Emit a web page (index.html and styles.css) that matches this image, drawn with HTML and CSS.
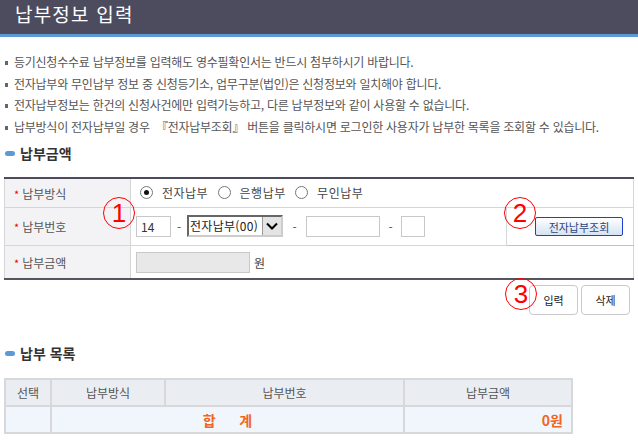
FILE: index.html
```html
<!DOCTYPE html>
<html lang="ko">

<head>
	<meta charset="utf-8">
	<meta name="viewport" content="width=device-width, initial-scale=1.0">
	<title>납부정보 입력</title>
	<link rel="stylesheet" href="styles.css">
</head>

<body>
	<header class="page_head">
		<h1>납부정보 입력</h1>
	</header>

	<main>
		<ul class="notice">
			<li>등기신청수수료 납부정보를 입력해도 영수필확인서는 반드시 첨부하시기 바랍니다.</li>
			<li>전자납부와 무인납부 정보 중 신청등기소, 업무구분(법인)은 신청정보와 일치해야 합니다.</li>
			<li>전자납부정보는 한건의 신청사건에만 입력가능하고, 다른 납부정보와 같이 사용할 수 없습니다.</li>
			<li>납부방식이 전자납부일 경우 &nbsp;『전자납부조회』 버튼을 클릭하시면 로그인한 사용자가 납부한 목록을 조회할 수 있습니다.</li>
		</ul>

		<h2 class="sec_title">납부금액</h2>

		<div class="pay_form">
			<table class="form_table">
				<tr>
					<th><span class="req">*</span>납부방식</th>
					<td colspan="2">
						<label class="radio"><span class="dot checked"></span>전자납부</label>
						<label class="radio"><span class="dot"></span>은행납부</label>
						<label class="radio"><span class="dot"></span>무인납부</label>
					</td>
				</tr>
				<tr>
					<th><span class="req">*</span>납부번호</th>
					<td class="num_cell">
						<div class="num_wrap">
							<input class="field w34" type="text" value="14">
							<span class="dash d1">-</span>
							<div class="fake_select">
								<span class="sel_text">전자납부(00)</span>
								<span class="sel_btn">
									<svg width="12" height="8" viewBox="0 0 12 8"><path d="M1 1.5 L6 6.5 L11 1.5" fill="none" stroke="#000" stroke-width="2"/></svg>
								</span>
							</div>
							<span class="dash d2">-</span>
							<input class="field w74" type="text">
							<span class="dash d3">-</span>
							<input class="field w24" type="text">
						</div>
					</td>
					<td class="lookup_cell"><button class="lookup_btn">전자납부조회</button></td>
				</tr>
				<tr>
					<th><span class="req">*</span>납부금액</th>
					<td colspan="2">
						<div class="num_wrap">
							<input class="field w114 disabled" type="text" disabled>
							<span class="unit">원</span>
						</div>
					</td>
				</tr>
			</table>

			<div class="btn_row">
				<button class="act_btn">입력</button>
				<button class="act_btn">삭제</button>
			</div>

			<span class="mark mark1">1</span>
			<span class="mark mark2">2</span>
			<span class="mark mark3">3</span>
		</div>

		<h2 class="sec_title list_title">납부 목록</h2>

		<table class="list_table">
			<tr>
				<th class="c1">선택</th>
				<th class="c2">납부방식</th>
				<th class="c3">납부번호</th>
				<th class="c4">납부금액</th>
			</tr>
			<tr class="sum_row">
				<td></td>
				<td colspan="2" class="sum_label">합&nbsp;&nbsp;&nbsp;&nbsp;&nbsp;&nbsp;계</td>
				<td class="sum_value">0원</td>
			</tr>
		</table>
	</main>
</body>

</html>
```

FILE: styles.css
```css
* {
	margin: 0;
	padding: 0;
	box-sizing: border-box;
}

body {
	font-family: "Noto Sans CJK KR", "Noto Sans", sans-serif;
	font-size: 12px;
	color: #555;
	background: #fff;
}

/* 상단 제목 */
.page_head {
	height: 37px;
	background: #4d4c5e;
	border-bottom: 3px solid #5b9bd5;
	padding-left: 15px;
}

.page_head h1 {
	font-size: 19px;
	font-weight: normal;
	color: #fff;
	line-height: 28px;
	letter-spacing: 1.2px;
}

/* 안내문 */
.notice {
	list-style: none;
	margin-top: 14px;
}

.notice li {
	position: relative;
	padding-left: 14px;
	line-height: 21.6px;
	letter-spacing: -0.25px;
	white-space: nowrap;
}

.notice li::before {
	content: "";
	position: absolute;
	left: 5px;
	top: 10px;
	width: 3px;
	height: 4px;
	background: #666;
}

/* 소제목 */
.sec_title {
	margin-top: 6px;
	padding-left: 20px;
	position: relative;
	font-size: 14px;
	line-height: 20px;
	color: #333;
}

.sec_title::before {
	content: "";
	position: absolute;
	left: 5px;
	top: 8px;
	width: 10px;
	height: 5px;
	border-radius: 3px;
	background: #5b9bd5;
}

/* 입력 폼 */
.pay_form {
	position: relative;
	margin: 14px 4px 0 4px;
}

.form_table {
	width: 630px;
	border-collapse: collapse;
	border-top: 2px solid #4d4c5e;
	border-bottom: 2px solid #55555f;
}

.form_table th {
	width: 126px;
	background: #f3f3f6;
	font-weight: normal;
	text-align: left;
	padding-left: 9px;
	border: 1px solid #d6d6d9;
	border-top: 0;
	color: #555;
}

.form_table td {
	border: 1px solid #d6d6d9;
	border-top: 0;
	border-left: 0;
	padding-left: 5px;
}

.form_table tr:nth-child(1) th,
.form_table tr:nth-child(1) td {
	height: 29px;
}

.form_table tr:nth-child(2) th,
.form_table tr:nth-child(2) td {
	height: 38px;
}

.form_table tr:nth-child(3) th,
.form_table tr:nth-child(3) td {
	height: 34px;
	border-bottom: 0;
}

.req {
	color: #e00;
	margin-right: 3px;
	font-size: 11px;
}

.radio {
	display: inline-flex;
	align-items: center;
	margin-left: 4px;
	margin-right: 2px;
	font-size: 12px;
	color: #444;
	letter-spacing: 0.5px;
}

.dot {
	display: inline-block;
	width: 13px;
	height: 13px;
	border: 1px solid #777;
	border-radius: 50%;
	margin-right: 9px;
	position: relative;
	background: #fff;
}

.dot.checked::after {
	content: "";
	position: absolute;
	left: 3px;
	top: 3px;
	width: 5px;
	height: 5px;
	border-radius: 50%;
	background: #111;
}

.num_wrap {
	display: flex;
	align-items: center;
	white-space: nowrap;
}

.field {
	height: 21px;
	border: 1px solid #c8c8c8;
	font-family: inherit;
	font-size: 12px;
	color: #333;
	padding: 0 4px;
	background: #fff;
}

.w34 {
	width: 35px;
}

.w74 {
	width: 74px;
}

.w24 {
	width: 24px;
}

.w114 {
	width: 114px;
}

.field.disabled {
	background: #e8e8e8;
}

.dash {
	text-align: center;
	color: #555;
}

.d1 {
	width: 16px;
}

.d2 {
	width: 23px;
}

.d3 {
	width: 21px;
}

.fake_select {
	display: flex;
	align-items: stretch;
	width: 96px;
	height: 22px;
	border: 2px solid #666;
	border-right-color: #ccc;
	border-bottom-color: #ccc;
	background: #fff;
}

.sel_text {
	flex: 1;
	font-size: 12px;
	color: #222;
	line-height: 18px;
	padding-left: 1px;
	letter-spacing: 0.3px;
}

.sel_btn {
	width: 19px;
	background: #e4e4e4;
	border-left: 1px solid #999;
	display: flex;
	align-items: center;
	justify-content: center;
}

.unit {
	margin-left: 4px;
	color: #444;
}

.lookup_cell {
	width: 127px;
	border-bottom-color: #a8c8f0 !important;
	text-align: right;
	padding-right: 10px;
}

.lookup_btn {
	width: 88px;
	height: 19px;
	border: 1px solid #1e3fd0;
	border-radius: 2px;
	background: linear-gradient(#ffffff, #d6e2f3);
	font-family: inherit;
	font-size: 11px;
	color: #2a4680;
	margin-top: 1px;
}

.btn_row {
	display: flex;
	justify-content: flex-end;
	gap: 3px;
	margin-top: 5px;
	width: 626px;
}

.act_btn {
	width: 49px;
	height: 30px;
	border: 1px solid #c9c9c9;
	border-radius: 4px;
	background: #fff;
	font-family: inherit;
	font-size: 11px;
	color: #222;
}

/* 안내 번호 표시 */
.mark {
	position: absolute;
	width: 32px;
	height: 32px;
	border: 1px solid #f00;
	border-radius: 50%;
	color: #f00;
	font-family: "Liberation Sans", sans-serif;
	font-size: 26px;
	line-height: 30px;
	text-align: center;
}

.mark1 {
	left: 99px;
	top: 20px;
}

.mark2 {
	left: 500px;
	top: 20px;
}

.mark3 {
	left: 501px;
	top: 101px;
}

/* 목록 */
.list_title {
	margin-top: 28px;
}

.list_table {
	margin: 15px 0 0 4px;
	width: 569px;
	border-collapse: collapse;
	border: 2px solid #d8d8dc;
}

.list_table th,
.list_table td {
	border: 2px solid #d8d8dc;
	height: 27px;
	text-align: center;
}

.list_table th {
	background: #eaeef3;
	font-weight: normal;
	color: #555;
}

.c1 {
	width: 46px;
}

.c2 {
	width: 114px;
}

.c3 {
	width: 239px;
}

.sum_row td {
	background: #f1f5fc;
	color: #f0661e;
	font-weight: bold;
	font-size: 14px;
}

.sum_value {
	text-align: right !important;
	padding-right: 8px;
}
```
